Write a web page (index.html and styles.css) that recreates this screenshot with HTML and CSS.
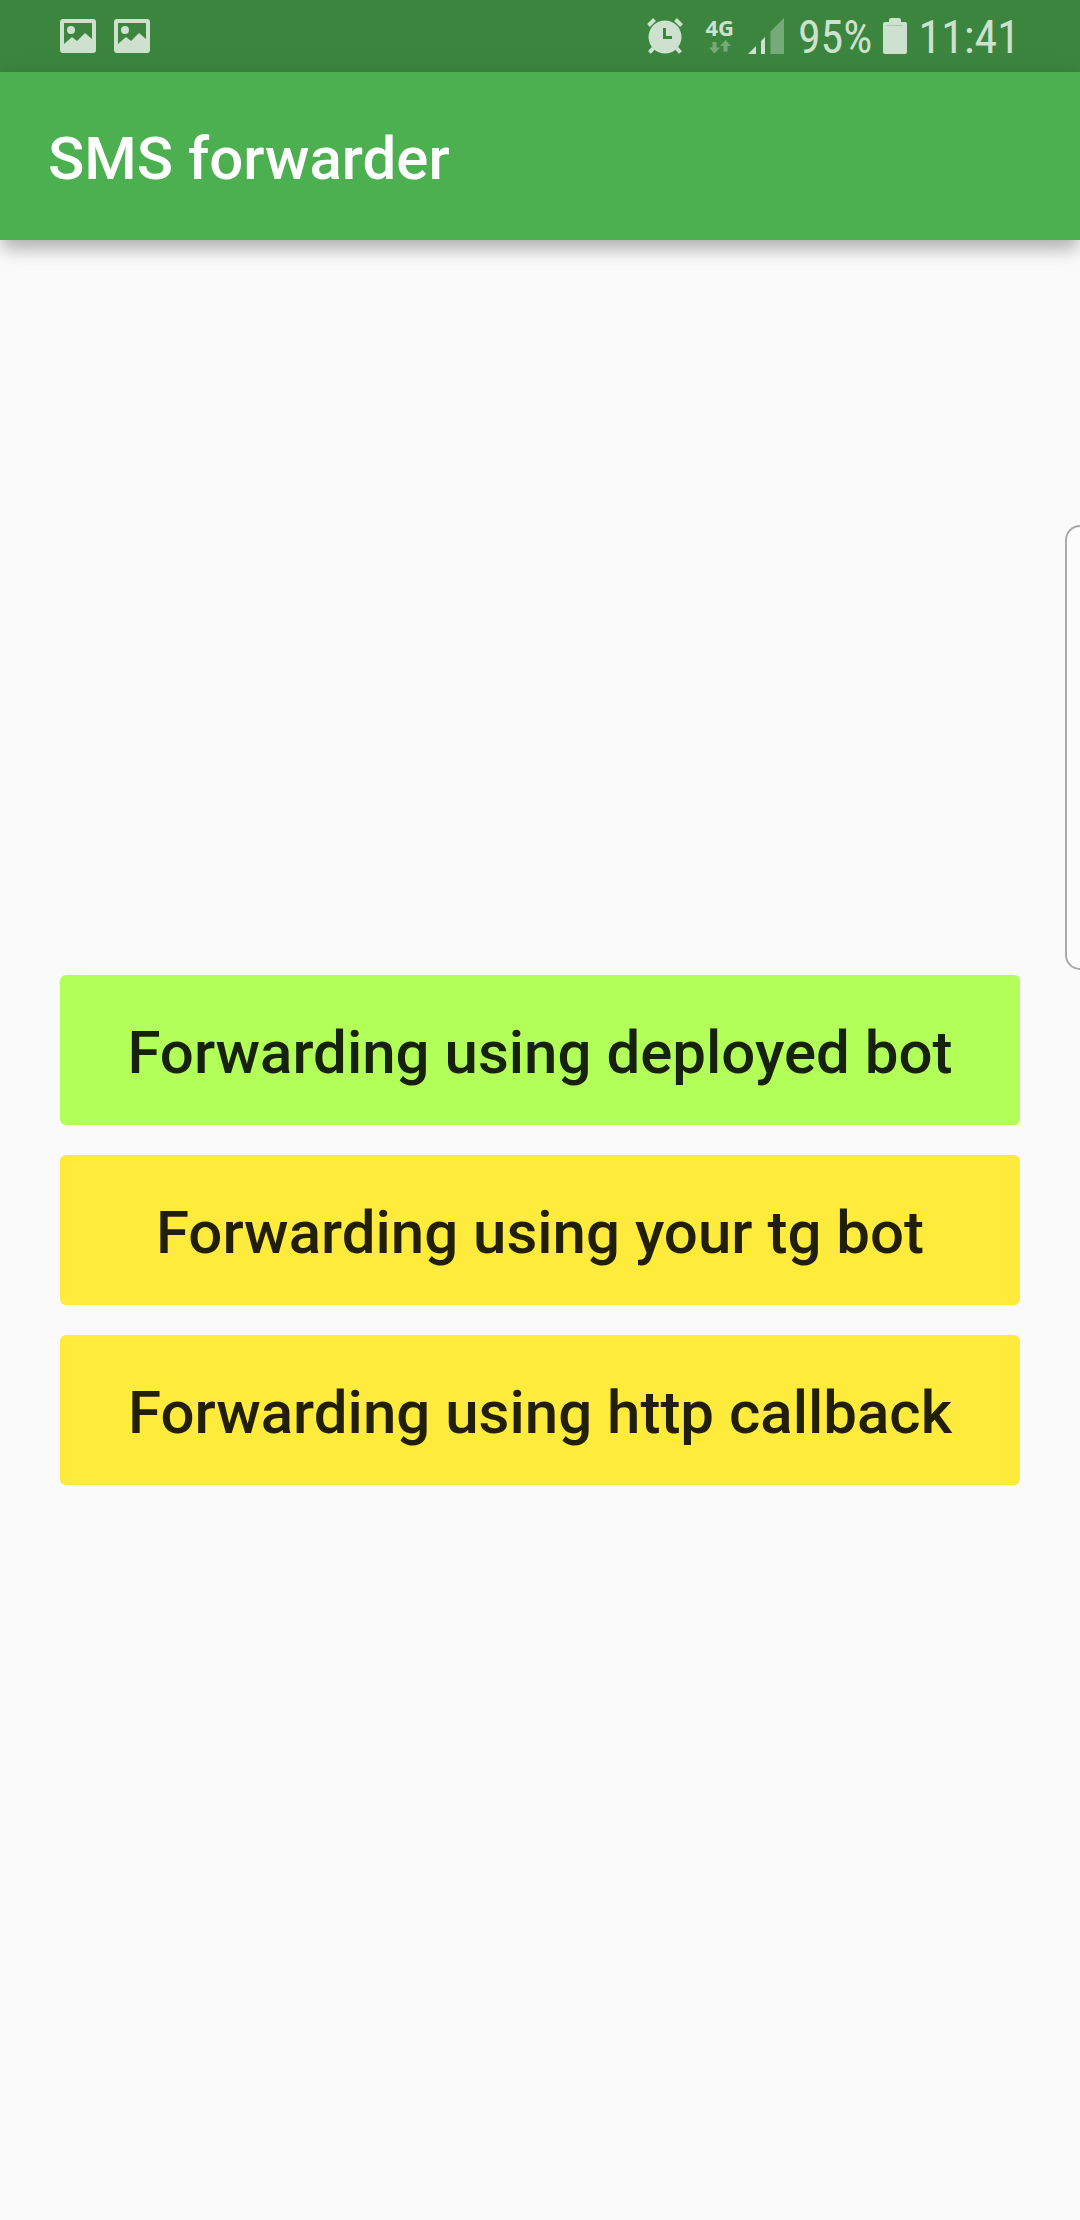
FILE: index.html
```html
<!DOCTYPE html>
<html lang="en">
<head>
<meta charset="utf-8">
<meta name="viewport" content="width=device-width, initial-scale=1">
<title>SMS forwarder</title>
<link rel="stylesheet" href="styles.css">
</head>
<body>
<div class="screen">
  <div class="status-bar">
    <div class="status-group notifications">
      <svg class="icon-picture" viewBox="0 0 36 34" aria-hidden="true">
        <path fill-rule="evenodd" d="M3 0H33Q36 0 36 3V31Q36 34 33 34H3Q0 34 0 31V3Q0 0 3 0ZM4 4V25L12 18L17 22L25 14L32 20V4Z"/>
        <circle cx="11" cy="11" r="4"/>
      </svg>
      <svg class="icon-picture" viewBox="0 0 36 34" aria-hidden="true">
        <path fill-rule="evenodd" d="M3 0H33Q36 0 36 3V31Q36 34 33 34H3Q0 34 0 31V3Q0 0 3 0ZM4 4V25L12 18L17 22L25 14L32 20V4Z"/>
        <circle cx="11" cy="11" r="4"/>
      </svg>
    </div>
    <div class="status-group system">
      <svg class="icon-alarm" viewBox="0 0 36 36" aria-hidden="true">
        <path fill-rule="evenodd" d="M18 2.5A16.5 16.5 0 1 1 18 35.5A16.5 16.5 0 1 1 18 2.5ZM16 10V21H25V18H19V10Z"/>
        <path class="stroke" d="M1.5 7.5L7.5 1.5M28.500 1.5L34.500 7.5M6.500 30L2.500 34.500M29.500 30L33.500 34.500"/>
      </svg>
      <div class="network">
        <span class="network-type">4G</span>
        <svg class="icon-transfer" viewBox="0 0 22 14" aria-hidden="true">
          <path d="M3.500 2H7.500V7.500H11L5.500 13.500L0 7.500H3.500ZM14.500 11.500V6H11L16.500 0L22 6H18.500V11.500Z"/>
        </svg>
      </div>
      <svg class="icon-signal" viewBox="0 0 36 36" aria-hidden="true">
        <path d="M0 36L8 28V36ZM13 36V23L17 19V36Z"/>
        <path class="dim" d="M22.500 36V13.500L36 0V36Z"/>
      </svg>
      <div class="status-group power">
        <span class="status-text">95%</span>
        <svg class="icon-battery" viewBox="0 0 24 36" aria-hidden="true">
          <path d="M8 0H16Q18 0 18 2V4H22Q24 4 24 6V34Q24 36 22 36H2Q0 36 0 34V6Q0 4 2 4H6V2Q6 0 8 0Z"/>
          <path class="level" d="M4 7H20V8H4Z"/>
        </svg>
        <time class="status-text">11:41</time>
      </div>
    </div>
  </div>
  <header class="app-bar">
    <h1 class="app-title">SMS forwarder</h1>
  </header>
  <main class="content">
    <button type="button" class="option option-active">Forwarding using deployed bot</button>
    <button type="button" class="option">Forwarding using your tg bot</button>
    <button type="button" class="option">Forwarding using http callback</button>
  </main>
  <div class="edge-handle"></div>
</div>
</body>
</html>
```

FILE: styles.css
```css
*, *::before, *::after {
  box-sizing: border-box;
}

body {
  margin: 0;
  background: #fafafa;
  font-family: Roboto, sans-serif;
}

.screen {
  position: relative;
  display: flex;
  flex-direction: column;
  min-height: 100vh;
  overflow: hidden;
}

.status-bar {
  display: flex;
  justify-content: space-between;
  align-items: center;
  height: 72px;
  padding: 0 60px;
  background: #3c853f;
  color: #cee1cf;
  fill: #cee1cf;
}

.status-group {
  display: flex;
  align-items: center;
}

.notifications {
  gap: 18px;
}

.system {
  gap: 14px;
}

.power {
  gap: 11px;
}

.icon-picture {
  width: 36px;
  height: 34px;
}

.icon-alarm {
  width: 36px;
  height: 36px;
  margin-right: 8px;
}

.icon-alarm .stroke {
  fill: none;
  stroke: #cee1cf;
  stroke-width: 4;
}

.network {
  display: flex;
  flex-direction: column;
  align-items: center;
  gap: 4px;
}

.network-type {
  font: 700 22px/17px "Noto Sans", sans-serif;
}

.icon-transfer {
  width: 22px;
  height: 14px;
  fill: #77aa79;
}

.icon-signal {
  width: 36px;
  height: 36px;
}

.icon-signal .dim {
  fill: #77aa79;
}

.status-text {
  padding-top: 2px;
  font-family: "Roboto Condensed", "Liberation Sans Narrow", Roboto, sans-serif;
  font-size: 46px;
  line-height: 70px;
}

.icon-battery {
  width: 24px;
  height: 36px;
}

.icon-battery .level {
  fill: #a5c8a7;
}

.app-bar {
  display: flex;
  align-items: center;
  height: 168px;
  padding: 6px 48px 0;
  background: #4caf50;
  box-shadow: 0 12px 15px -3px rgba(0, 0, 0, 0.2), 0 6px 24px rgba(0, 0, 0, 0.14);
}

.app-title {
  margin: 0;
  color: #fff;
  font-size: 60px;
  font-weight: 500;
  line-height: 72px;
}

.content {
  display: flex;
  flex: 1;
  flex-direction: column;
  justify-content: center;
  gap: 30px;
  padding: 0 60px;
}

.option {
  height: 150px;
  padding: 6px 48px 0;
  border: 0;
  border-radius: 6px;
  background: #ffeb3b;
  color: rgba(0, 0, 0, 0.87);
  font-family: inherit;
  font-size: 60px;
  font-weight: 500;
  line-height: 72px;
}

.option-active {
  background: #b2ff59;
}

.edge-handle {
  position: absolute;
  top: 525px;
  right: 0;
  width: 15px;
  height: 445px;
  border: 2px solid #aaa;
  border-right: 0;
  border-radius: 20px 0 0 20px;
  background: #fcfcfc;
}
```
